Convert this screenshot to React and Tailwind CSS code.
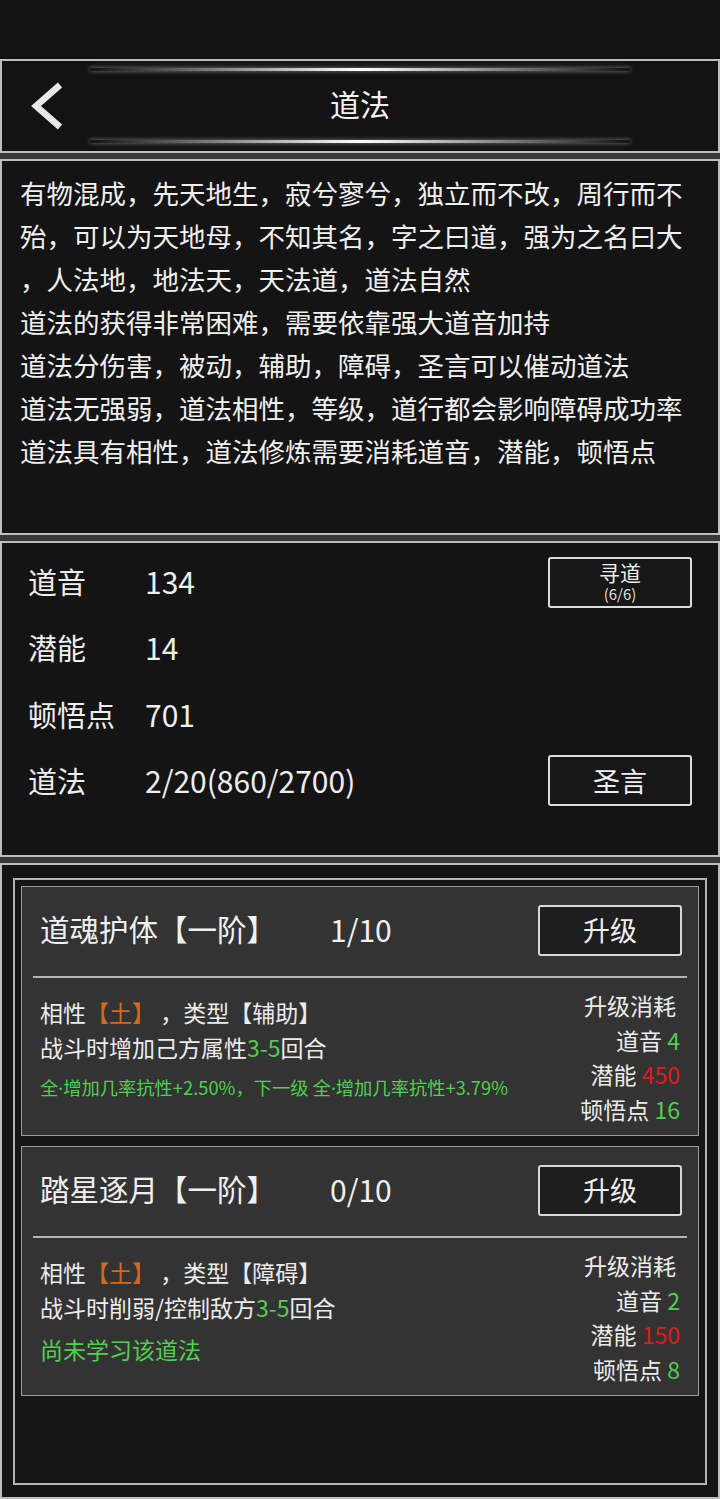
import React from "react";

const font = { fontFamily: '"Noto Sans CJK SC", "Noto Sans", sans-serif' };

const intro = [
  "有物混成，先天地生，寂兮寥兮，独立而不改，周行而不",
  "殆，可以为天地母，不知其名，字之曰道，强为之名曰大",
  "，人法地，地法天，天法道，道法自然",
  "道法的获得非常困难，需要依靠强大道音加持",
  "道法分伤害，被动，辅助，障碍，圣言可以催动道法",
  "道法无强弱，道法相性，等级，道行都会影响障碍成功率",
  "道法具有相性，道法修炼需要消耗道音，潜能，顿悟点",
];

const skills = [
  {
    name: "道魂护体【一阶】",
    level: "1/10",
    type: "辅助",
    desc: "战斗时增加己方属性",
    note: ["增加几率抗性+2.50%，下一级 全", "增加几率抗性+3.79%"],
    learned: true,
    cost: { yin: 4, qian: 450, dun: 16 },
  },
  {
    name: "踏星逐月【一阶】",
    level: "0/10",
    type: "障碍",
    desc: "战斗时削弱/控制敌方",
    note: "尚未学习该道法",
    learned: false,
    cost: { yin: 2, qian: 150, dun: 8 },
  },
];

function GlowLine() {
  return (
    <div className="mx-auto w-[540px] h-[3px] rounded-full bg-gradient-to-r from-transparent via-white to-transparent shadow-[0_0_4px_rgba(255,255,255,0.5)]" />
  );
}

function Header() {
  return (
    <div className="h-[94px] border-2 border-[#bdbdbd] bg-[#131313] flex flex-col pt-[7px] pb-[8px]">
      <GlowLine />
      <div className="flex-1 grid grid-cols-[1fr_auto_1fr] items-center">
        <div className="pl-[28px] flex items-center">
          <svg width="36" height="52" viewBox="0 0 36 52">
            <polyline
              points="30,5 6,26 30,47"
              fill="none"
              stroke="#e8e8e8"
              strokeWidth="6.5"
              strokeLinejoin="miter"
            />
          </svg>
        </div>
        <div className="-mt-[5px] text-[30px] text-[#f2f2f2] leading-none">道法</div>
        <div />
      </div>
      <GlowLine />
    </div>
  );
}

function StatRow({ label, value, children }) {
  return (
    <div className="h-[66.5px] flex items-center">
      <div className="w-[117px] text-[29px] text-[#eeeeee]">{label}</div>
      <div className="flex-1 text-[30px] text-[#eeeeee]">{value}</div>
      {children}
    </div>
  );
}

const dot = <span className="[font-family:'Noto_Sans',sans-serif]">·</span>;

function SkillCard({ skill }) {
  return (
    <div className="h-[250px] border border-[#9c9c9c] bg-[#333333] flex flex-col">
      <div className="flex items-center pt-[18px] pl-[18px] pr-[16px]">
        <div className="w-[290px] -mt-[3px] text-[29.5px] text-[#f0f0f0] leading-none">{skill.name}</div>
        <div className="flex-1 -mt-[3px] text-[30px] text-[#f0f0f0] leading-none">{skill.level}</div>
        <button className="w-[144px] h-[51px] border-2 border-[#d8d8d8] rounded-[3px] bg-[#1e1e1e] text-[27px] text-[#f0f0f0]">
          升级
        </button>
      </div>
      <div className="mx-[11px] mt-[20px] h-[2px] bg-[#b4b4b4]" />
      <div className="flex pl-[18px] pr-[18px] pt-[10px]">
        <div className="flex-1 pt-[7px]">
          <div className="text-[23px] leading-[35px] text-[#ececec]">
            相性<span className="text-[#d06a22]">【土】</span> ，类型【{skill.type}】
          </div>
          <div className="text-[23px] leading-[35px] text-[#ececec]">
            {skill.desc}
            <span className="text-[#4fd04f]">3-5</span>回合
          </div>
          {skill.learned ? (
            <div className="mt-[6px] whitespace-nowrap text-[18.3px] leading-[32px] text-[#4fd04f]">
              全{dot}
              {skill.note[0]}
              {dot}
              {skill.note[1]}
            </div>
          ) : (
            <div className="mt-[4px] text-[23px] leading-[40px] text-[#4fd04f]">{skill.note}</div>
          )}
        </div>
        <div className="text-right text-[23px] leading-[34.7px] text-[#ececec]">
          <div className="pr-[4px]">升级消耗</div>
          <div>
            道音 <span className="text-[#4fd04f]">{skill.cost.yin}</span>
          </div>
          <div>
            潜能 <span className="text-[#dd1c1c]">{skill.cost.qian}</span>
          </div>
          <div>
            顿悟点 <span className="text-[#4fd04f]">{skill.cost.dun}</span>
          </div>
        </div>
      </div>
    </div>
  );
}

export default function App() {
  return (
    <div className="w-[720px] h-[1499px] bg-[#121212] flex flex-col overflow-hidden" style={font}>
      <div className="h-[59px] shrink-0 bg-[#121212]" />
      <div className="flex-1 flex flex-col gap-[6px] bg-[#383838]">
        <Header />

        {/* intro text */}
        <div className="h-[376px] border-2 border-[#bdbdbd] bg-[#141414] pl-[18px] pt-[10px]">
          {intro.map((line, i) => (
            <div key={i} className="whitespace-nowrap text-[26.5px] leading-[43px] text-[#f0f0f0]">
              {line}
            </div>
          ))}
        </div>

        {/* stats */}
        <div className="h-[316px] border-2 border-[#bdbdbd] bg-[#141414] pl-[26px] pr-[26px] pt-[5px]">
          <StatRow label="道音" value="134">
            <button className="w-[144px] h-[51px] mt-[2px] border-2 border-[#dcdcdc] rounded-[3px] bg-[#171717] flex flex-col items-center justify-start pt-[2px] text-[#eeeeee]">
              <span className="block text-[21px] leading-[22px]">寻道</span>
              <span className="block mt-[2px] text-[15px] leading-[18px] text-[#dddddd]">(6/6)</span>
            </button>
          </StatRow>
          <StatRow label="潜能" value="14" />
          <StatRow label="顿悟点" value="701" />
          <StatRow label="道法" value="2/20(860/2700)">
            <button className="w-[144px] h-[51px] border-2 border-[#dcdcdc] rounded-[3px] bg-[#171717] text-[27px] text-[#eeeeee]">
              圣言
            </button>
          </StatRow>
        </div>

        {/* skills */}
        <div className="flex-1 border-2 border-[#bdbdbd] bg-[#141414] pt-[13px] px-[11px] pb-[12px] flex flex-col">
          <div className="flex-1 border-2 border-[#b4b4b4] bg-[#151515] p-[6px] flex flex-col gap-[10px]">
            {skills.map((s) => (
              <SkillCard key={s.name} skill={s} />
            ))}
          </div>
        </div>
      </div>
    </div>
  );
}
